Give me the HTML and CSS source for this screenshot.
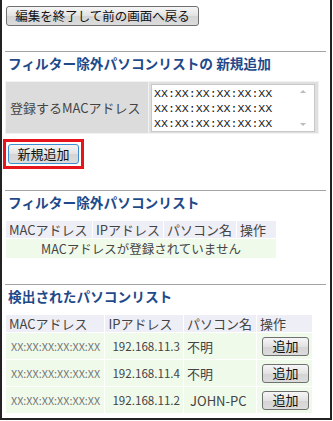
FILE: index.html
```html
<!DOCTYPE html>
<html lang="ja">
<head>
    <meta charset="UTF-8">
    <title>フィルター除外パソコン</title>
    <link rel="stylesheet" href="styles.css">
</head>
<body>
<div class="frame">

    <button class="btn back">編集を終了して前の画面へ戻る</button>

    <div class="block">
        <h2>フィルター除外パソコンリストの 新規追加</h2>
        <table class="form">
            <tr>
                <th>登録するMACアドレス</th>
                <td>
                    <div class="mac-field">
                        <textarea class="macs" rows="3">XX:XX:XX:XX:XX:XX
XX:XX:XX:XX:XX:XX
XX:XX:XX:XX:XX:XX</textarea>
                        <span class="arrow up"></span>
                        <span class="arrow down"></span>
                    </div>
                </td>
            </tr>
        </table>
        <div class="mark"><button class="btn add">新規追加</button></div>
    </div>

    <div class="block">
        <h2>フィルター除外パソコンリスト</h2>
        <table class="list excluded">
            <tr>
                <th class="e-mac">MACアドレス</th>
                <th class="e-ip">IPアドレス</th>
                <th class="e-name">パソコン名</th>
                <th>操作</th>
            </tr>
            <tr>
                <td colspan="4" class="empty">MACアドレスが登録されていません</td>
            </tr>
        </table>
    </div>

    <div class="block">
        <h2>検出されたパソコンリスト</h2>
        <table class="list found">
            <tr>
                <th class="c-mac">MACアドレス</th>
                <th class="c-ip">IPアドレス</th>
                <th class="c-name">パソコン名</th>
                <th>操作</th>
            </tr>
            <tr>
                <td class="mac">XX:XX:XX:XX:XX:XX</td>
                <td class="ip">192.168.11.3</td>
                <td>不明</td>
                <td><button class="btn small">追加</button></td>
            </tr>
            <tr>
                <td class="mac">XX:XX:XX:XX:XX:XX</td>
                <td class="ip">192.168.11.4</td>
                <td>不明</td>
                <td><button class="btn small">追加</button></td>
            </tr>
            <tr>
                <td class="mac">XX:XX:XX:XX:XX:XX</td>
                <td class="ip">192.168.11.2</td>
                <td class="pc">JOHN-PC</td>
                <td><button class="btn small">追加</button></td>
            </tr>
        </table>
    </div>

</div>
</body>
</html>
```

FILE: styles.css
```css
body {
    margin: 0;
    font-family: "Noto Sans CJK JP", "Liberation Sans", sans-serif;
    font-size: 13px;
    color: #333;
    background: #fff;
}

.frame {
    box-sizing: border-box;
    width: 332px;
    height: 420px;
    border: 2px solid #222;
    border-top: none;
    padding: 6px 4px 0 4px;
    overflow: hidden;
}

.btn {
    display: inline-block;
    box-sizing: border-box;
    font-family: "Noto Sans CJK JP", sans-serif;
    color: #111;
    background: linear-gradient(#f6f6f6, #e2e2e2 50%, #d4d4d4 51%, #dcdcdc);
    border: 1px solid #707070;
    border-radius: 3px;
    padding: 0;
    line-height: 16px;
    cursor: pointer;
}

.back {
    display: block;
    width: 193px;
    height: 20px;
    font-size: 12.5px;
}

.block {
    margin-top: 25px;
    border-top: 1px solid #a4a4a4;
    margin-left: -1px;
}

h2 {
    margin: 1px 0 8px 3px;
    font-size: 13.7px;
    line-height: 20px;
    font-weight: bold;
    color: #1f4a8a;
}

/* registration form */
.form {
    width: 314px;
    border-collapse: separate;
    border-spacing: 1px;
    background: #f2f2f2;
}

.form th {
    width: 140px;
    background: #dcdcdc;
    font-weight: normal;
    text-align: left;
    padding: 0 0 0 4px;
    color: #444;
    font-size: 13px;
}

.form td {
    background: #dfdfdf;
    padding: 2px 3px 1px 2px;
}

.mac-field {
    position: relative;
    width: 164px;
}

.macs {
    display: block;
    box-sizing: border-box;
    width: 164px;
    height: 48px;
    margin: 0;
    padding: 1px 2px;
    border: 1px solid #c8c8c8;
    font-family: "Liberation Mono", monospace;
    font-size: 11.6px;
    line-height: 15px;
    color: #111;
    resize: none;
    overflow: hidden;
}

.arrow {
    position: absolute;
    right: 9px;
    width: 0;
    height: 0;
    border-left: 3px solid transparent;
    border-right: 3px solid transparent;
}

.arrow.up {
    top: 6px;
    border-bottom: 3px solid #bcbcbc;
}

.arrow.down {
    bottom: 6px;
    border-top: 3px solid #bcbcbc;
}

.mark {
    width: max-content;
    margin: 5px 0 -4px -2px;
    padding: 2px;
    border: 3px solid #e8141b;
}

.add {
    display: block;
    width: 71px;
    height: 20px;
    font-size: 13px;
    border-color: #3d8fd1;
}

/* lists */
.list {
    border-collapse: separate;
    border-spacing: 1px;
}

.list th {
    background: #eeeef6;
    font-weight: normal;
    text-align: left;
    color: #444;
    font-size: 13px;
    line-height: 17px;
    padding: 0 3px;
    white-space: nowrap;
}

.list td {
    background: #effaeb;
    color: #444;
    line-height: 17px;
    white-space: nowrap;
}

.list .empty {
    text-align: center;
    font-size: 12.5px;
}

.excluded {
    width: 272px;
}

.excluded .e-mac {
    width: 80px;
}

.excluded .e-ip {
    width: 64px;
}

.excluded .e-name {
    width: 66px;
}

.found {
    width: 308px;
}

.found td {
    height: 26px;
    padding: 0 3px;
    font-size: 13px;
}

.found .c-mac {
    width: 95px;
}

.found .c-ip {
    width: 64px;
}

.found .c-name {
    width: 68px;
}

.found .mac {
    font-size: 10.8px;
    color: #777;
    padding-left: 5px;
}

.found .ip {
    font-size: 11.6px;
    padding-left: 7px;
}

.found .pc {
    padding-left: 6px;
}

.small {
    width: 47px;
    height: 19px;
    margin-left: 2px;
    font-size: 13px;
    vertical-align: middle;
}
```
